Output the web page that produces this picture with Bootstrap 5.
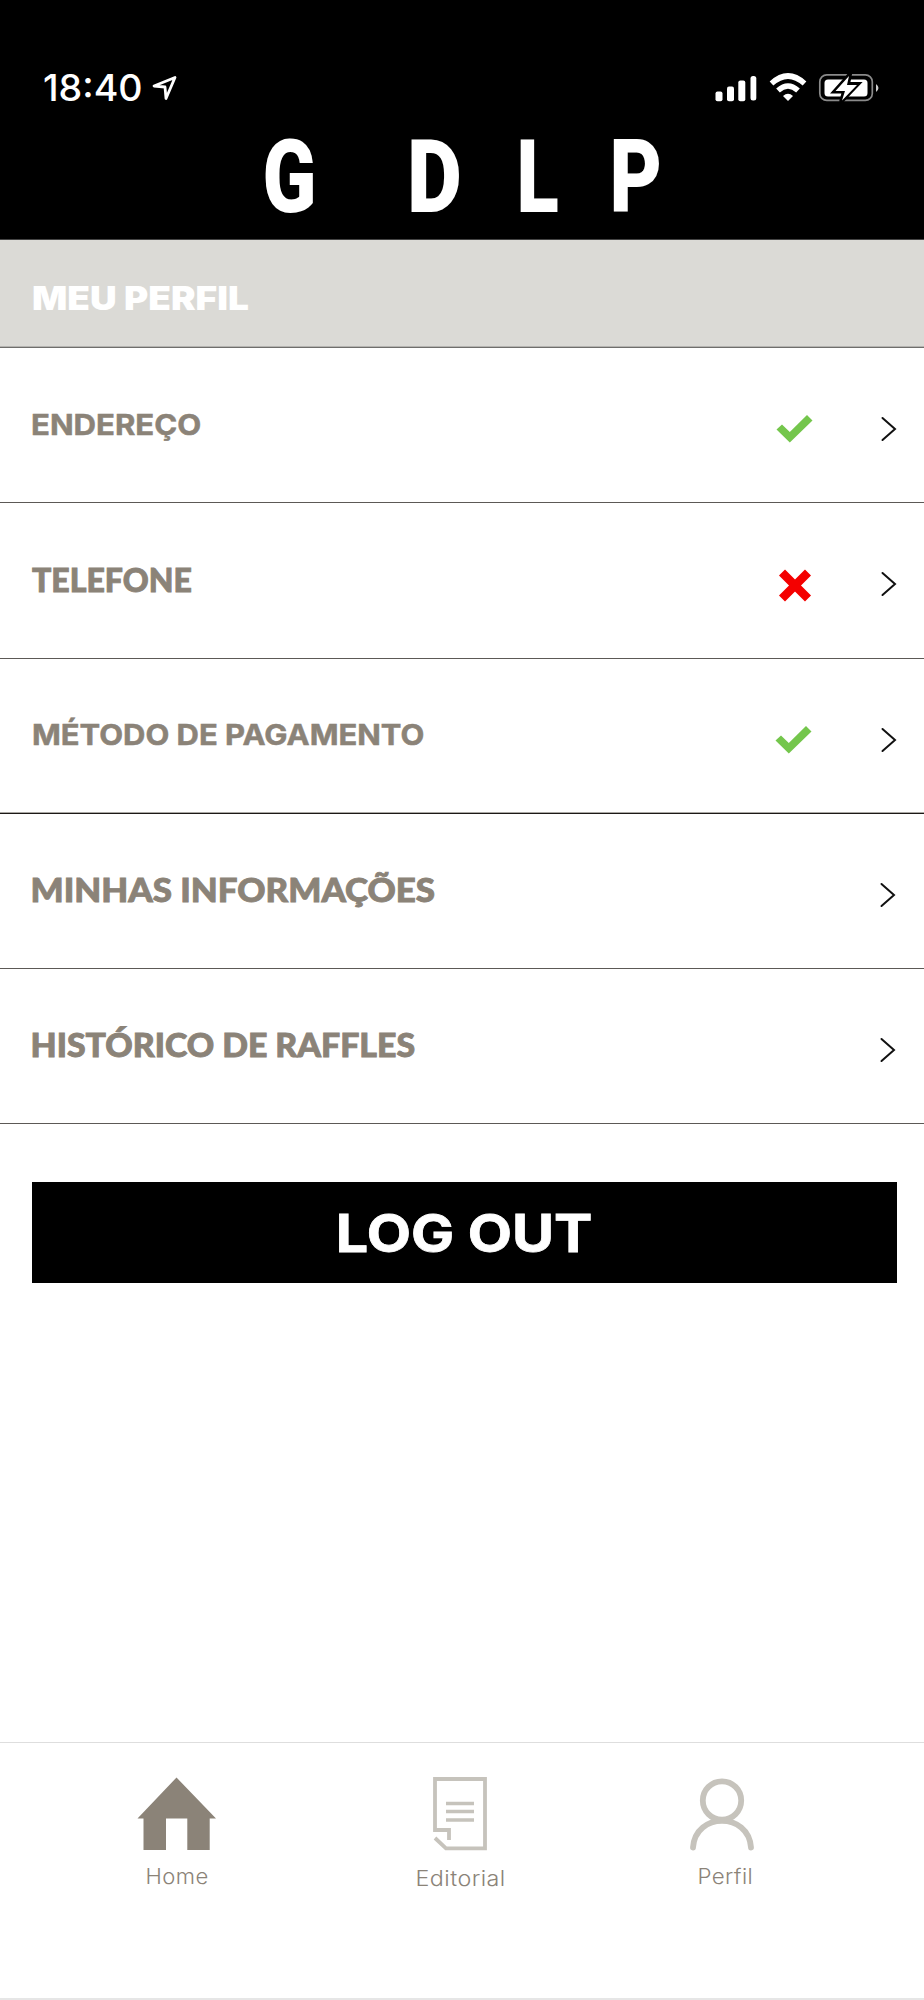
<!DOCTYPE html>
<html lang="pt-BR">
<head>
<meta charset="utf-8">
<meta name="viewport" content="width=device-width, initial-scale=1">
<title>Meu Perfil</title>
<link rel="stylesheet" href="https://cdn.jsdelivr.net/npm/bootstrap@5.3.0/dist/css/bootstrap.min.css">
<style>
  body { font-family: Inter, "Liberation Sans", sans-serif; color: #8b8378; background: #fff; }
  svg { display: block; flex: none; overflow: visible; }
  .phone { height: 2000px; }
  .top-bar { height: 240px; background: #000; border-bottom: 1px solid #444; }
  .status { padding: 69px 45px 0 43px; height: 129px; }
  .clock { width: 100px; font-size: 36.5px; font-weight: 500; line-height: 38px; color: #fff; white-space: nowrap; }
  .page-title { height: 108px; padding-left: 31.5px; background: #dbdad6; border-bottom: 1px solid #6f6e6c; box-shadow: inset 0 -1px #b4b3b0; }
  .page-title h1 { font-size: 32.5px; font-weight: 900; line-height: 40px; padding-top: 11px; }
  .wide { display: inline-block; transform-origin: 0 50%; }
  .item { height: 155px; padding: 0 27px 0 30px; border-bottom: 1px solid #5c5956; color: #8b8378; text-decoration: none; }
  .item.tall { height: 156px; }
  .item.dark { border-bottom-color: #1c1816; box-shadow: inset 0 -1px #aaa8a4; }
  .item span { font-size: 28.8px; font-weight: 700; white-space: nowrap; margin-top: -1px; -webkit-text-stroke: .5px #8b8378; }
  .item.dark span { margin-top: -3px; }
  .item .geo { font-family: Lato, sans-serif; font-size: 33px; font-weight: 900; margin-top: -2px; -webkit-text-stroke: .9px #8b8378; }
  .marks { margin-top: 7px; gap: 66px; }
  .btn-logout { height: 101px; margin: 58px 27px 0 32px; background: #000; color: #fff; font-size: 52px; font-weight: 700; line-height: 103px; border: 0; border-radius: 0; padding: 0; -webkit-text-stroke: .8px #fff; }
  .btn-logout .wide { transform-origin: 50% 50%; }
  .tabs { height: 258px; border-top: 1px solid #dedede; border-bottom: 2px solid #e6e6e6; padding: 33px 71px 0 49px; }
  .tabs a { color: #8b8378; text-decoration: none; width: 256px; font-size: 21px; font-weight: 350; line-height: 24px; letter-spacing: .4px; }
  .tabs a span { margin-top: 13px; transform-origin: 50% 50%; }
  .tabs a.middle { margin-left: 20px; }
  .tabs a.middle span { margin-top: 15px; }
</style>
</head>
<body>
<div class="phone d-flex flex-column">
  <header class="top-bar">
    <div class="status d-flex">
      <span class="clock"><span class="wide" style="transform:scaleX(1.03)">18:40</span></span>
      <svg class="ms-2 mt-1" width="28" height="30" viewBox="151 73 28 30" fill="none" stroke="#fff" stroke-width="2.800" stroke-linejoin="round"><path d="M154 86L175 77.500L166 98.500L165 87Z"/></svg>
      <svg class="ms-auto" width="166" height="36" viewBox="713 69 166 36">
        <g fill="#fff"><rect x="715.500" y="91.500" width="7" height="9.700" rx="2"/><rect x="727" y="86.500" width="7" height="14.700" rx="2"/><rect x="738.300" y="80.500" width="7" height="20.700" rx="2"/><rect x="750.500" y="76" width="5.800" height="24.500" rx="2.500"/></g>
        <g fill="none" stroke="#fff" stroke-width="5.500"><path d="M771.500 83.500Q788 68.500 804.500 83.500"/><path d="M778 90.500Q788 81.500 798 90.500"/></g>
        <path fill="#fff" d="M783 96Q788 91.500 793 96L788 101Z"/>
        <rect x="819.800" y="74.800" width="52.500" height="25.600" rx="7" fill="none" stroke="#8a8a8a" stroke-width="1.700"/>
        <rect x="824.500" y="79.500" width="43" height="17" rx="3.500" fill="#fff"/>
        <path fill="#ccc" d="M876 84Q881 88 876 92Z"/>
        <path d="M850 74L834.500 91.500H844L841 102L858 84H848Z" fill="#fff" stroke="#000" stroke-width="4"/>
        <path d="M849 76L835.500 91H845L842 100.500L857 85H847Z" fill="#fff"/>
      </svg>
    </div>
    <svg width="924" height="100" viewBox="0 129 924 100" fill="#fff" font-family="Roboto, sans-serif" font-weight="900" font-size="102.700">
      <text transform="translate(262.500 212) scale(.77 1)">G</text>
      <text transform="translate(407 212) scale(.825 1)">D</text>
      <text transform="translate(516.500 212) scale(.76 1)">L</text>
      <text transform="translate(609.500 212) scale(.785 1)">P</text>
    </svg>
  </header>

  <div class="page-title d-flex align-items-center"><h1 class="text-white m-0"><span class="wide" style="transform:scaleX(1.137)">MEU PERFIL</span></h1></div>

  <nav>
    <a href="#" class="item d-flex align-items-center justify-content-between">
      <span class="wide" style="transform:translateX(1px) scaleX(1.08)">ENDEREÇO</span>
      <div class="marks d-flex align-items-center">
        <svg width="38" height="32" viewBox="0 0 38 32"><path fill="#74c64c" d="M1.500 16.500L7 11.500L14.800 19L32 2L37.500 7.500L14.800 29.500Z"/></svg>
        <svg width="18" height="26" viewBox="0 0 18 26" fill="none" stroke="#111" stroke-width="2" stroke-linecap="round"><path d="M3.500 2L16 13L3.500 24"/></svg>
      </div>
    </a>
    <a href="#" class="item tall d-flex align-items-center justify-content-between">
      <span class="wide geo" style="transform:translateX(2px) scaleX(.97)">TELEFONE</span>
      <div class="marks d-flex align-items-center">
        <svg width="38" height="34" viewBox="0 -1 38 34"><path d="M7 4.500L33 30.500M33 4.500L7 30.500" stroke="#f40000" stroke-width="8.500"/></svg>
        <svg width="18" height="26" viewBox="0 0 18 26" fill="none" stroke="#111" stroke-width="2" stroke-linecap="round"><path d="M3.500 2L16 13L3.500 24"/></svg>
      </div>
    </a>
    <a href="#" class="item dark d-flex align-items-center justify-content-between">
      <span class="wide" style="transform:translateX(2px) scaleX(1.074)">MÉTODO DE PAGAMENTO</span>
      <div class="marks d-flex align-items-center">
        <svg width="38" height="32" viewBox="1 0 38 32"><path fill="#74c64c" d="M1.500 16.500L7 11.500L14.800 19L32 2L37.500 7.500L14.800 29.500Z"/></svg>
        <svg width="18" height="26" viewBox="0 0 18 26" fill="none" stroke="#111" stroke-width="2" stroke-linecap="round"><path d="M3.500 2L16 13L3.500 24"/></svg>
      </div>
    </a>
    <a href="#" class="item d-flex align-items-center justify-content-between">
      <span class="wide geo" style="transform:translateX(.5px) scaleX(1.057)">MINHAS INFORMAÇÕES</span>
      <div class="marks"><svg width="18" height="26" viewBox="1 0 18 26" fill="none" stroke="#111" stroke-width="2" stroke-linecap="round"><path d="M3.500 2L16 13L3.500 24"/></svg></div>
    </a>
    <a href="#" class="item d-flex align-items-center justify-content-between">
      <span class="wide geo" style="transform:translateX(.5px) scaleX(1.025)">HISTÓRICO DE RAFFLES</span>
      <div class="marks"><svg width="18" height="26" viewBox="1 0 18 26" fill="none" stroke="#111" stroke-width="2" stroke-linecap="round"><path d="M3.500 2L16 13L3.500 24"/></svg></div>
    </a>
  </nav>

  <button class="btn btn-logout" type="button"><span class="wide" style="transform:scaleX(1.105)">LOG OUT</span></button>

  <footer class="tabs mt-auto d-flex justify-content-between">
    <a href="#" class="d-flex flex-column align-items-center">
      <svg width="80" height="76" viewBox="137 1776 80 76"><path fill="#8b8378" d="M176.500 1777.500L216 1818.500H209.700V1850H187.300V1818.500H166V1850H143.500V1818.500H137.500Z"/></svg>
      <span style="transform:scaleX(1.05)">Home</span>
    </a>
    <a href="#" class="middle d-flex flex-column align-items-center">
      <svg width="80" height="76" viewBox="421 1776 80 76" fill="none" stroke="#c6c3bc" stroke-width="3.800"><path d="M449 1840V1830H435V1779H485V1848.300H446L435 1838"/><path d="M446 1803.500H474M446 1811.500H474M446 1820H474" stroke-width="3.500"/></svg>
      <span style="transform:scaleX(1.11)">Editorial</span>
    </a>
    <a href="#" class="d-flex flex-column align-items-center">
      <svg width="80" height="76" viewBox="685 1776 80 76" fill="none" stroke="#c6c3bc" stroke-width="5.800" stroke-linecap="round"><circle cx="722" cy="1800.500" r="19.200"/><path d="M693 1847.500C695.500 1812 748.500 1812 751 1847.500"/></svg>
      <span style="transform:scaleX(1.06)">Perfil</span>
    </a>
  </footer>
</div>
<script src="https://cdn.jsdelivr.net/npm/bootstrap@5.3.0/dist/js/bootstrap.bundle.min.js"></script>
</body>
</html>
